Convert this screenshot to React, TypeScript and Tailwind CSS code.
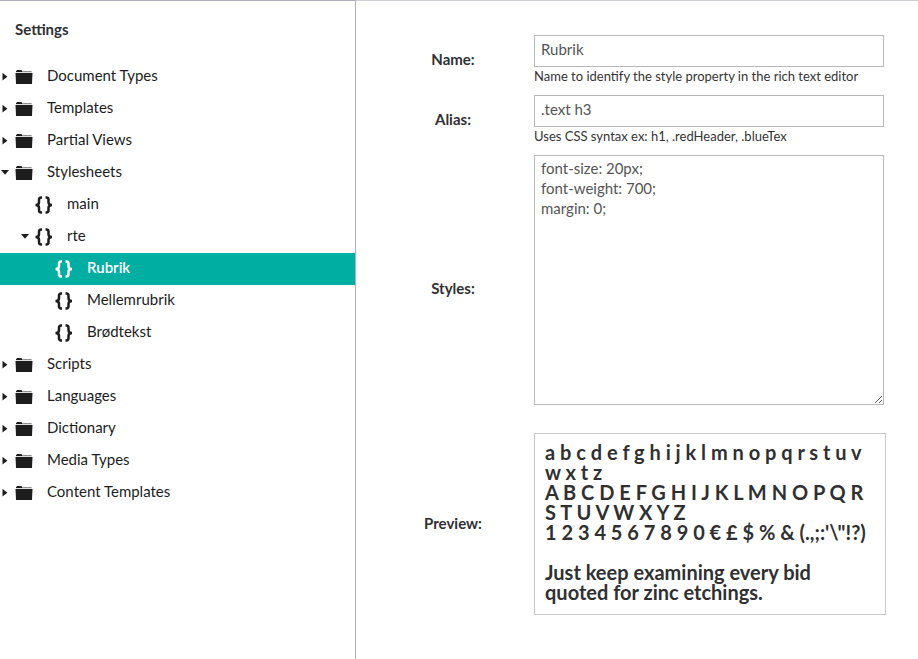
import { ReactNode, useState } from "react";

type TreeItem = {
  label: string;
  level: number;
  icon: "folder" | "braces";
  state?: "open" | "closed";
};

const items: TreeItem[] = [
  { label: "Document Types", level: 0, icon: "folder", state: "closed" },
  { label: "Templates", level: 0, icon: "folder", state: "closed" },
  { label: "Partial Views", level: 0, icon: "folder", state: "closed" },
  { label: "Stylesheets", level: 0, icon: "folder", state: "open" },
  { label: "main", level: 1, icon: "braces" },
  { label: "rte", level: 1, icon: "braces", state: "open" },
  { label: "Rubrik", level: 2, icon: "braces" },
  { label: "Mellemrubrik", level: 2, icon: "braces" },
  { label: "Brødtekst", level: 2, icon: "braces" },
  { label: "Scripts", level: 0, icon: "folder", state: "closed" },
  { label: "Languages", level: 0, icon: "folder", state: "closed" },
  { label: "Dictionary", level: 0, icon: "folder", state: "closed" },
  { label: "Media Types", level: 0, icon: "folder", state: "closed" },
  { label: "Content Templates", level: 0, icon: "folder", state: "closed" },
];

const indent = ["pl-0", "pl-5", "pl-10"];

const Caret = ({ state }: { state?: "open" | "closed" }) => (
  <svg className="h-3 w-3 shrink-0" viewBox="0 0 12 12" fill="currentColor" aria-hidden="true">
    {state === "closed" && <path d="M2.500 1.800 7.400 5.700 2.500 9.600z" />}
    {state === "open" && <path d="M1 3h8L5 7.800z" />}
  </svg>
);

const FolderIcon = () => (
  <svg className="h-5 w-5" viewBox="0 0 20 20" fill="currentColor" aria-hidden="true">
    <path d="M2.500 4V3.500l.6-.5h4.400l.5 1v1H2V4z" />
    <path d="M8 4h9.500v1H8z" opacity=".5" />
    <path d="M2 5h16v1H2z" opacity=".15" />
    <path d="M1.500 6h17L18 17H2z" />
  </svg>
);

const BracesIcon = () => (
  <svg
    className="h-5 w-5"
    viewBox="0 0 20 20"
    fill="none"
    stroke="currentColor"
    strokeWidth="2.5"
    aria-hidden="true"
  >
    <path d="M8 2.500H7.200Q5 2.500 5 4.700v2.500Q5 10 1.500 10q3.500 0 3.500 2.800v2.500q0 2.200 2.200 2.200H8" />
    <path d="M11.500 2.500h.8q2.200 0 2.200 2.200v2.500Q14.500 10 18 10q-3.500 0-3.500 2.800v2.500q0 2.200-2.200 2.200h-.8" />
  </svg>
);

interface FieldProps {
  label: string;
  id: string;
  hint?: string;
  children: ReactNode;
}

const Field = ({ label, id, hint, children }: FieldProps) => (
  <div className="flex items-center">
    <label
      htmlFor={id}
      className="mr-6 w-[114px] shrink-0 pb-0.5 text-center font-bold text-[#303033]"
    >
      {label}
    </label>
    <div className="min-w-0 flex-1">
      {children}
      {hint && (
        <p id={`${id}-hint`} className="text-[13px] leading-[18px] text-[#343434]">
          {hint}
        </p>
      )}
    </div>
  </div>
);

const App = () => {
  const [selected, setSelected] = useState("Rubrik");
  const [name, setName] = useState("Rubrik");
  const [alias, setAlias] = useState(".text h3");
  const [styles, setStyles] = useState("font-size: 20px;\nfont-weight: 700;\nmargin: 0;");

  return (
    <div className="flex min-h-screen bg-white font-['Lato',sans-serif] text-[15px] leading-5 text-[#1d1d1d]">
      <nav className="w-[356px] shrink-0 border-t border-r border-[#b0afbf]">
        <h1 className="px-[15px] pt-[18px] pb-[22px] font-bold text-[#303033]">Settings</h1>
        <ul>
          {items.map((item) => (
            <li key={item.label}>
              <button
                type="button"
                onClick={() => setSelected(item.label)}
                className={`flex h-8 w-full items-center text-left ${indent[item.level]} ${
                  selected === item.label ? "bg-[#00aea2] font-semibold text-white" : ""
                }`}
              >
                <Caret state={item.state} />
                <span className="mr-[13px] ml-0.5">
                  {item.icon === "folder" ? <FolderIcon /> : <BracesIcon />}
                </span>
                <span className="pb-1">{item.label}</span>
              </button>
            </li>
          ))}
        </ul>
      </nav>

      <main className="min-w-0 flex-1 border-t border-[#d0d0d4] pt-[34px] pr-8 pl-10">
        <form className="flex flex-col gap-2.5">
          <Field
            label="Name:"
            id="name"
            hint="Name to identify the style property in the rich text editor"
          >
            <div className="pr-0.5">
              <input
                id="name"
                type="text"
                value={name}
                onChange={(e) => setName(e.target.value)}
                aria-describedby="name-hint"
                className="block h-8 w-full border border-[#b8b8bb] px-1.5 pb-1 text-[#555]"
              />
            </div>
          </Field>
          <Field label="Alias:" id="alias" hint="Uses CSS syntax ex: h1, .redHeader, .blueTex">
            <div className="pr-0.5">
              <input
                id="alias"
                type="text"
                value={alias}
                onChange={(e) => setAlias(e.target.value)}
                aria-describedby="alias-hint"
                className="block h-8 w-full border border-[#b8b8bb] px-1.5 pb-1 text-[#555]"
              />
            </div>
          </Field>
          <Field label="Styles:" id="styles">
            <div className="pr-0.5 pb-[18px]">
              <textarea
                id="styles"
                value={styles}
                onChange={(e) => setStyles(e.target.value)}
                className="block h-[250px] w-full border border-[#b8b8bb] px-1.5 py-0.5 text-[#555]"
              />
            </div>
          </Field>
          <Field label="Preview:" id="preview">
            <output
              id="preview"
              className="block border border-[#c8c8c8] px-2.5 pt-2 pb-3 text-xl leading-5 font-bold text-[#303033]"
            >
              a b c d e f g h i j k l m n o p q r s t u v w x t z
              <br />
              A B C D E F G H I J K L M N O P Q R S T U V W X Y Z
              <br />
              {`1 2 3 4 5 6 7 8 9 0 € £ $ % & (.,;:'\\"!?)`}
              <br />
              <br />
              Just keep examining every bid quoted for zinc etchings.
            </output>
          </Field>
        </form>
      </main>
    </div>
  );
};

export default App;
